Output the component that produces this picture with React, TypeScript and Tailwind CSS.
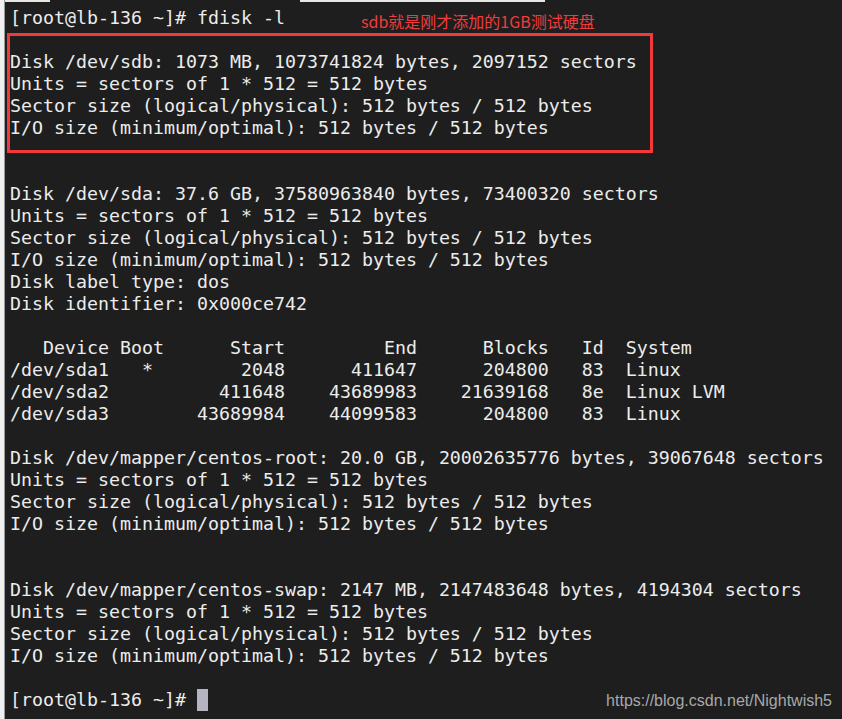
import React from "react";

const lines: string[] = [
  "[root@lb-136 ~]# fdisk -l",
  "",
  "Disk /dev/sdb: 1073 MB, 1073741824 bytes, 2097152 sectors",
  "Units = sectors of 1 * 512 = 512 bytes",
  "Sector size (logical/physical): 512 bytes / 512 bytes",
  "I/O size (minimum/optimal): 512 bytes / 512 bytes",
  "",
  "",
  "Disk /dev/sda: 37.6 GB, 37580963840 bytes, 73400320 sectors",
  "Units = sectors of 1 * 512 = 512 bytes",
  "Sector size (logical/physical): 512 bytes / 512 bytes",
  "I/O size (minimum/optimal): 512 bytes / 512 bytes",
  "Disk label type: dos",
  "Disk identifier: 0x000ce742",
  "",
  "   Device Boot      Start         End      Blocks   Id  System",
  "/dev/sda1   *        2048      411647      204800   83  Linux",
  "/dev/sda2          411648    43689983    21639168   8e  Linux LVM",
  "/dev/sda3        43689984    44099583      204800   83  Linux",
  "",
  "Disk /dev/mapper/centos-root: 20.0 GB, 20002635776 bytes, 39067648 sectors",
  "Units = sectors of 1 * 512 = 512 bytes",
  "Sector size (logical/physical): 512 bytes / 512 bytes",
  "I/O size (minimum/optimal): 512 bytes / 512 bytes",
  "",
  "",
  "Disk /dev/mapper/centos-swap: 2147 MB, 2147483648 bytes, 4194304 sectors",
  "Units = sectors of 1 * 512 = 512 bytes",
  "Sector size (logical/physical): 512 bytes / 512 bytes",
  "I/O size (minimum/optimal): 512 bytes / 512 bytes",
  "",
];

export default function App() {
  return (
    <div className="relative w-[842px] h-[719px] overflow-hidden bg-[#1e1e1e] flex">
      <div className="w-[5px] h-full bg-[#f0f0f0] border-r border-[#9a9a9a] shrink-0" />
      <div className="flex-1 flex flex-col">
        <div className="h-[2px] flex shrink-0">
          <div className="w-[45px] bg-[#e6e6e6]" />
          <div className="w-[250px]" />
          <div className="w-[245px] bg-[#e6e6e6]" />
        </div>
        <div
          className="pt-[5px] pl-[5px] text-[#ececec] text-[18.27px] leading-[22px] whitespace-pre"
          style={{ fontFamily: '"DejaVu Sans Mono", "Liberation Mono", monospace' }}
        >
          {lines.map((l, i) => (
            <div key={i} className="h-[22px]">
              {l}
            </div>
          ))}
          <div className="h-[22px] flex">
            <span>{"[root@lb-136 ~]# "}</span>
            <span className="inline-block w-[11px] h-[22px] bg-[#b4b4c2]" />
          </div>
        </div>
      </div>

      <div className="absolute left-[7px] top-[33px] w-[646px] h-[120px] border-[3px] border-[#f23a3a]" />
      <div
        className="absolute left-[361px] top-[10px] text-[16px] leading-[22px] text-[#f03c3c]"
        style={{ fontFamily: '"Microsoft YaHei", "Noto Sans CJK SC", sans-serif' }}
      >
        sdb就是刚才添加的1GB测试硬盘
      </div>
      <div
        className="absolute right-[10px] bottom-[8px] text-[16px] leading-[20px] text-[#a8a8a8]"
        style={{ fontFamily: '"Liberation Sans", Arial, sans-serif' }}
      >
        https://blog.csdn.net/Nightwish5
      </div>
    </div>
  );
}
